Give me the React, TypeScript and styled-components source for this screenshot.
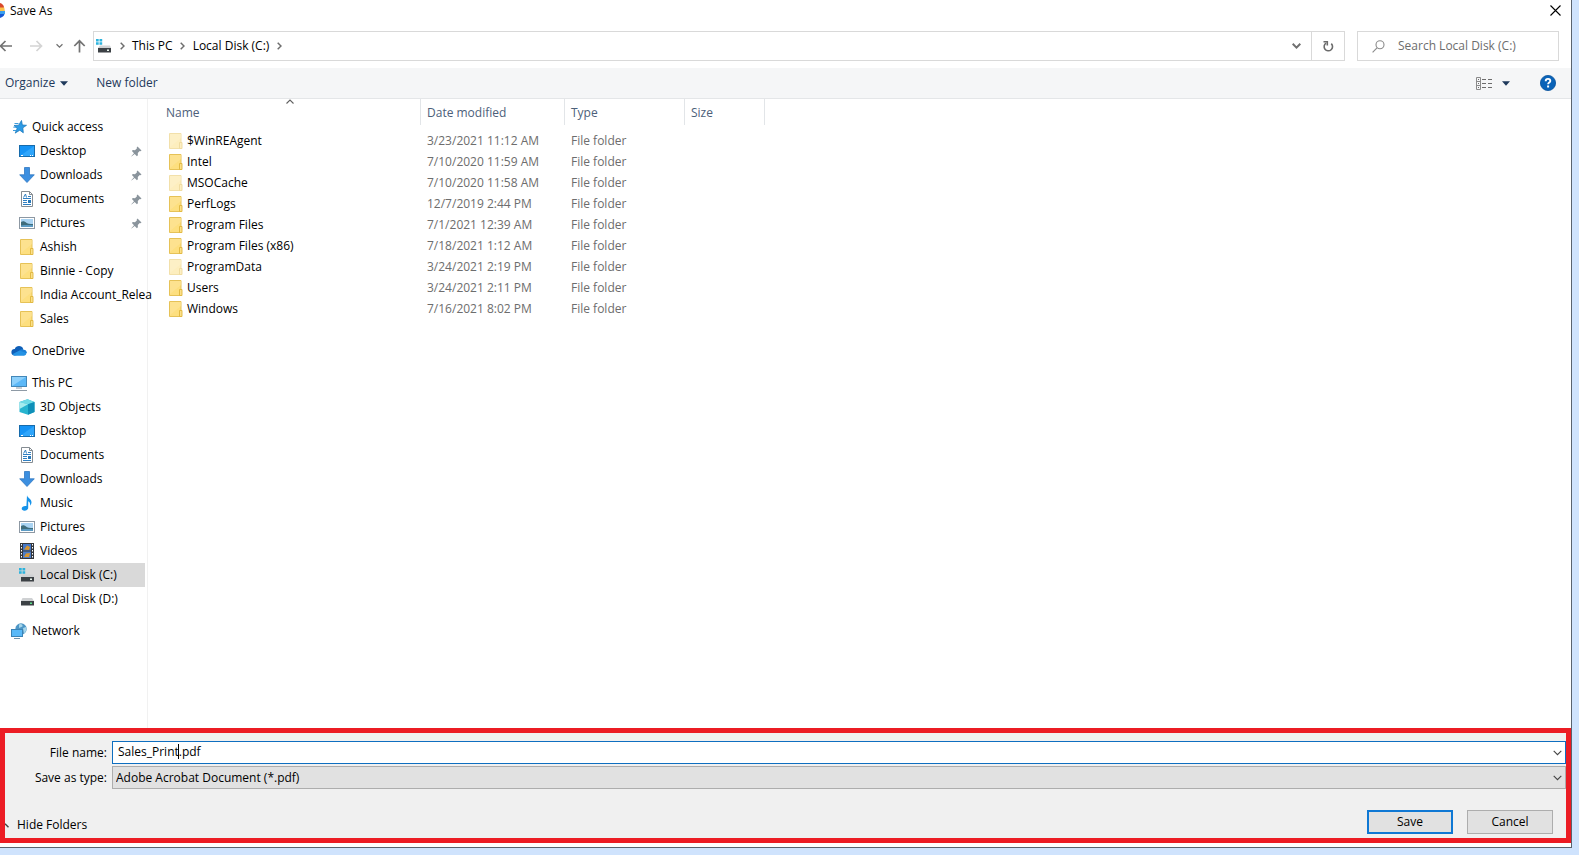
import React from "react";
import styled, { createGlobalStyle, css } from "styled-components";

const GlobalStyle = createGlobalStyle`
  *, *::before, *::after { box-sizing: border-box; }
  body {
    margin: 0;
    background: #cfe3fd;
    color: #000;
    font: 12px/16px "Open Sans", "Noto Sans", sans-serif;
  }
  button, input, select { font: inherit; color: inherit; }
  svg { display: block; flex: none; }
`;

const Desktop = styled.div`
  display: flex;
  min-height: 100vh;
  padding: 0 7px 7px 0;
  background: #cfe3fd;
`;

const Dialog = styled.main`
  flex: 1;
  min-width: 0;
  display: flex;
  flex-direction: column;
  background: #fff;
  border-right: 1px solid #59636f;
  border-bottom: 1px solid #59636f;
`;

const plainButton = css`
  display: flex;
  align-items: center;
  justify-content: center;
  padding: 0;
  border: 0;
  background: none;
`;

const TitleBar = styled.header`
  display: flex;
  align-items: flex-start;
  height: 22px;
  padding-right: 8px;
`;

const Title = styled.h1`
  flex: 1;
  margin: 3px 0 0 5px;
  font-size: 12px;
  font-weight: 400;
`;

const LogoSlot = styled.span`
  padding-top: 3px;
`;

const IconButton = styled.button<{ $width?: number; $before?: number }>`
  ${plainButton}
  width: ${(p) => p.$width ?? 14}px;
  height: 20px;
  margin-left: ${(p) => p.$before ?? 0}px;
  flex: none;
`;

const NavRow = styled.nav`
  display: flex;
  align-items: center;
  padding: 9px 12px 7px 0;
`;

const AddressBar = styled.div`
  flex: 1;
  display: flex;
  align-items: center;
  height: 30px;
  padding-left: 2px;
  margin: 0 12px 0 7px;
  border: 1px solid #d9d9d9;
`;

const Crumb = styled.button`
  ${plainButton}
  height: 28px;
  white-space: nowrap;
`;

const CrumbArrow = styled.span`
  display: flex;
  justify-content: center;
  width: 20px;
`;

const AddressSpacer = styled.span`
  flex: 1;
`;

const RefreshButton = styled.button`
  ${plainButton}
  width: 33px;
  height: 28px;
  border-left: 1px solid #d9d9d9;
`;

const SearchBox = styled.label`
  display: flex;
  align-items: center;
  gap: 13px;
  width: 202px;
  height: 30px;
  padding-left: 14px;
  border: 1px solid #d9d9d9;
`;

const SearchInput = styled.input`
  flex: 1;
  min-width: 0;
  padding: 0;
  border: 0;
  outline: 0;
  background: none;
  &::placeholder { color: #6d6d6d; opacity: 1; }
`;

const Toolbar = styled.div`
  display: flex;
  align-items: center;
  height: 31px;
  padding: 0 15px 0 5px;
  background: #f5f6f7;
  border-bottom: 1px solid #e4e6e8;
  color: #1e395b;
`;

const ToolButton = styled.button<{ $gap?: number }>`
  ${plainButton}
  gap: 5px;
  height: 28px;
  margin-right: ${(p) => p.$gap ?? 0}px;
`;

const ToolSpacer = styled.span`
  flex: 1;
`;

const Body = styled.div`
  flex: 1;
  display: flex;
  min-height: 0;
`;

const Sidebar = styled.aside`
  flex: none;
  width: 148px;
  padding: 16px 2px 8px 0;
  border-right: 1px solid #f1f1f1;
`;

const TreeGroup = styled.ul`
  margin: 0 0 8px;
  padding: 0;
  list-style: none;
`;

const TreeItem = styled.a<{ $root?: boolean; $selected?: boolean }>`
  display: flex;
  align-items: center;
  gap: 5px;
  height: 24px;
  padding-left: ${(p) => (p.$root ? 11 : 19)}px;
  background: ${(p) => (p.$selected ? "#d9d9d9" : "none")};
  color: inherit;
  text-decoration: none;
`;

const TreeLabel = styled.span`
  flex: 1;
  min-width: 0;
  white-space: nowrap;
`;

const IconSlot = styled.span`
  display: flex;
  justify-content: center;
  width: 16px;
`;

const PinSlot = styled.span`
  padding-right: 3px;
`;

const Files = styled.section`
  flex: 1;
  min-width: 0;
  padding-left: 12px;
`;

const FileTable = styled.table`
  width: 605px;
  table-layout: fixed;
  border-collapse: separate;
  border-spacing: 0;
  tbody::before {
    content: "";
    display: block;
    height: 5px;
  }
`;

const HeadCell = styled.th<{ $width: number }>`
  position: relative;
  width: ${(p) => p.$width}px;
  height: 26px;
  padding: 1px 6px 0;
  border-right: 1px solid #e2e5e8;
  color: #4c607a;
  font-weight: 400;
  text-align: left;
`;

const SortMark = styled.span`
  position: absolute;
  top: 0;
  left: 50%;
  margin-left: -4px;
`;

const Cell = styled.td`
  height: 21px;
  padding: 0 6px;
  color: #6d6d6d;
  white-space: nowrap;
`;

const FileName = styled.span`
  display: flex;
  align-items: center;
  gap: 4px;
  padding-left: 3px;
  color: #000;
`;

const SavePanel = styled.form`
  display: flex;
  flex-direction: column;
  margin-bottom: 4px;
  border: 5px solid #ec1c24;
  background: #f0f0f0;
`;

const Field = styled.div`
  display: flex;
  align-items: center;
  margin-bottom: 2px;
  &:first-child { margin-top: 8px; }
`;

const FieldLabel = styled.label`
  width: 107px;
  padding-right: 5px;
  text-align: right;
  white-space: nowrap;
`;

const Combo = styled.div`
  position: relative;
  flex: 1;
  min-width: 0;
`;

const NameInput = styled.input`
  display: block;
  width: 100%;
  height: 23px;
  padding: 0 24px 2px 5px;
  border: 1px solid #0f6fc0;
  border-radius: 0;
  outline: 0;
  background: #fff;
`;

const Caret = styled.span`
  position: absolute;
  top: 3px;
  left: 66px;
  width: 1px;
  height: 15px;
  background: #000;
`;

const TypeSelect = styled.select`
  display: block;
  appearance: none;
  width: 100%;
  height: 23px;
  padding: 0 24px 0 3px;
  border: 1px solid #adadad;
  border-radius: 0;
  background: #e1e1e1;
`;

const ComboArrow = styled.span`
  position: absolute;
  top: 9px;
  right: 4px;
  pointer-events: none;
`;

const Actions = styled.div`
  display: flex;
  align-items: center;
  gap: 14px;
  padding: 19px 13px 4px 0;
`;

const HideFolders = styled.button`
  ${plainButton}
  gap: 8px;
  margin-right: auto;
  padding-top: 6px;
`;

const PushButton = styled.button<{ $primary?: boolean }>`
  width: 86px;
  height: 24px;
  padding: 0;
  border: ${(p) => (p.$primary ? "2px solid #0f78d4" : "1px solid #adadad")};
  background: #e1e1e1;
`;

const AppLogo = () => (
  <svg width="5" height="16" viewBox="0 0 5 16">
    <path d="M0 0c2 .4 3.500 2 4 4l-.5 2H0z" fill="#d9482b" />
    <path d="M0 4.500h4.300L5 9H0z" fill="#fbc34a" />
    <path d="M0 8.500c2-.5 3.500-.5 5-.2 0 3.500-1.700 6-5 6.700z" fill="#1558d6" />
    <path d="M0 8.500c2-.5 3.500-.5 5-.2V11H0z" fill="#3aa0ee" />
  </svg>
);

const CloseIcon = () => (
  <svg width="11" height="11" viewBox="0 0 11 11" stroke="#000" strokeWidth="1.100">
    <path d="M.5.5l10 10M10.500.5l-10 10" />
  </svg>
);

const ArrowIcon = ({ kind }: { kind: "back" | "forward" | "up" }) => (
  <svg
    width="14"
    height="14"
    viewBox="0 0 14 14"
    fill="none"
    stroke={kind === "forward" ? "#d4d4d4" : "#737373"}
    strokeWidth="1.700"
  >
    {kind === "back" && <path d="M13 7H2M6.500 2L1.500 7l5 5" />}
    {kind === "forward" && <path d="M1 7H12M7.500 2l5 5-5 5" />}
    {kind === "up" && <path d="M7.500 13.500V2M2.300 7L7.500 1.800 12.700 7" />}
  </svg>
);

const Chevron = ({ size = 9, color = "#707070", weight = 1.6 }) => (
  <svg width={size} height="6" viewBox="0 0 9 6" fill="none" stroke={color} strokeWidth={weight}>
    <path d="M.7.8l3.800 3.800L8.300.8" />
  </svg>
);

const CrumbChevron = () => (
  <svg width="5" height="8" viewBox="0 0 5 8" fill="none" stroke="#6e6e6e" strokeWidth="1.500">
    <path d="M.7.7L4 4 .7 7.300" />
  </svg>
);

const RefreshIcon = () => (
  <svg width="12" height="12" viewBox="0 0 12 12" fill="none" stroke="#6b6b6b" strokeWidth="1.600">
    <path d="M9.300 3.600A4.200 4.200 0 1 1 4 3.100" />
    <path d="M1.500 1.700h3.800v3.800" />
  </svg>
);

const SearchIcon = () => (
  <svg width="13" height="13" viewBox="0 0 13 13" fill="none" stroke="#8b8b8b" strokeWidth="1.100">
    <circle cx="8" cy="4.800" r="4" />
    <path d="M5 7.800L.6 12.400" />
  </svg>
);

const Triangle = () => (
  <svg width="8" height="5" viewBox="0 0 8 5">
    <path d="M0 .3h8L4 4.700z" fill="#1e395b" />
  </svg>
);

const ViewIcon = () => (
  <svg width="17" height="13" viewBox="0 0 17 13" fill="none" stroke="#8a8a8a">
    <path d="M.5.5h4v12h-4zM.5 4.500h4M.5 8.500h4" />
    <path d="M2 2.500h1M2 6.500h1M2 10.500h1M6 2.500h4M12 2.500h4M6 6.500h4M12 6.500h4M6 10.500h4M12 10.500h4" stroke="#6c6c6c" />
  </svg>
);

const HelpIcon = () => (
  <svg width="16" height="16" viewBox="0 0 16 16">
    <circle cx="8" cy="8" r="7.600" fill="#0a63b8" stroke="#07529c" strokeWidth=".8" />
    <path d="M5.700 6.200C5.700 4.600 6.700 3.900 8 3.900s2.300.8 2.300 2c0 1.600-2.200 1.700-2.200 3.300" fill="none" stroke="#fff" strokeWidth="1.900" />
    <rect x="7.100" y="10.500" width="2" height="2" fill="#fff" />
  </svg>
);

const PinIcon = () => (
  <svg width="11" height="11" viewBox="0 0 11 11">
    <path d="M6.500.5l4 4-1 .8-.8-.2-1.900 2 .1 2.200-1 .9-2.200-2.300L.5 10.600l-.2-.3L3 7.300.9 5.100l.9-1 2.200.1 2-1.900-.3-.9z" fill="#8a949c" />
  </svg>
);

const StarIcon = () => (
  <svg width="16" height="16" viewBox="0 0 16 16">
    <path d="M10.500 1.500l.8 4.500 4.200.3-3.700 2.500.5 5-3.500-2.600-4.600 2.900 2-4.700L3 6.500l4.700-.3z" fill="#2c9be6" stroke="#1b78bd" strokeWidth=".8" />
    <path d="M3.500 4.500h4M2.300 8.200h2.700M2 11.500h3" stroke="#3d9bdb" />
  </svg>
);

const DesktopIcon = () => (
  <svg width="16" height="16" viewBox="0 0 16 16">
    <rect x=".5" y="2.500" width="15" height="11" fill="#1593f5" stroke="#176bab" />
    <path d="M1 13l14-10v10z" fill="#2ea5fb" />
    <path d="M2 12.500h2M11 12.500h1M13 12.500h1" stroke="#fff" />
  </svg>
);

const DownloadIcon = () => (
  <svg width="16" height="16" viewBox="0 0 16 16">
    <path d="M5.500.5h5v7.300h4.800L8 15.500.7 7.800h4.800z" fill="#3c8fe0" stroke="#2e77c1" strokeWidth=".8" />
  </svg>
);

const DocumentIcon = () => (
  <svg width="16" height="16" viewBox="0 0 16 16">
    <path d="M2.500.5h8l3 3v12h-11z" fill="#fff" stroke="#858c92" />
    <path d="M10.500.5v3h3" fill="none" stroke="#858c92" />
    <path d="M4.500 6.500L6.500 3l1 3.500M9 5.500h3M4 7.500h8M4 9.500h4M4 11.500h4M4 13.500h8" fill="none" stroke="#2f7fc2" />
    <path d="M9 9h3v3H9z" fill="#2778ba" />
  </svg>
);

const PictureIcon = () => (
  <svg width="16" height="16" viewBox="0 0 16 16">
    <rect x=".5" y="2.500" width="15" height="11" fill="#fff" stroke="#8d98a3" />
    <rect x="2" y="4" width="12" height="8" fill="#a9d3f2" />
    <path d="M2 7c2-1.500 4-.5 5 .5s4 1.500 7 1.500v3H2z" fill="#3f6d7c" />
    <path d="M2 10.500c4-.7 8-.5 12-.3V12H2z" fill="#5d9cc4" />
  </svg>
);

const FolderIcon = ({ faded = false }: { faded?: boolean }) => (
  <svg width="14" height="16" viewBox="0 0 14 16" opacity={faded ? 0.5 : 1}>
    <path d="M.5.500h11.500V15.500H.5z" fill="#fddf7f" stroke="#e6c257" />
    <path d="M1 1l11 0v4L1 14z" fill="#fee59a" opacity=".6" />
    <path d="M10.500 9.500h2.500v6h-2.500z" fill="#fbe08a" stroke="#e0b63c" strokeWidth=".9" />
  </svg>
);

const CloudIcon = () => (
  <svg width="16" height="16" viewBox="0 0 16 16">
    <path d="M3.500 12.500a3.200 3.200 0 0 1 .3-6.500A4.500 4.500 0 0 1 12.200 6l-1 5z" fill="#0f5fb8" />
    <path d="M2.800 12.500a3 3 0 0 1-1-1.500L8.500 7.500a4 4 0 0 1 4-.8A3.100 3.100 0 0 1 13 12.800H4z" fill="#2492e4" />
    <path d="M8.500 7.500a4 4 0 0 1 4-.8 3.100 3.100 0 0 1 3.300 3.500z" fill="#1a7fd6" />
  </svg>
);

const PcIcon = () => (
  <svg width="16" height="16" viewBox="0 0 16 16">
    <rect x=".5" y="1.500" width="15" height="10" fill="#5cb8f7" stroke="#4387b8" />
    <path d="M1 11V2h14z" fill="#8dd0fb" />
    <path d="M5 13h6M0 15.500h16" stroke="#8e9aa5" />
  </svg>
);

const CubeIcon = () => (
  <svg width="16" height="16" viewBox="0 0 16 16">
    <path d="M.5 3L8.500.3 15.500 3v10L9 15.800.5 13z" fill="#27b4cf" />
    <path d="M.5 3L8.500.3 15.500 3 9 5.300z" fill="#6fdbe6" />
    <path d="M9 5.300L15.500 3v10L9 15.800z" fill="#0f8fb8" />
    <path d="M.5 3L9 5.300 .5 10z" fill="#a5ecee" />
  </svg>
);

const MusicIcon = () => (
  <svg width="16" height="16" viewBox="0 0 16 16">
    <path d="M8 .3c.5 2.700 4.500 3.500 4.500 7 0 1.500-.7 2.700-1.500 3.400.5-2.700-.7-4-1.800-4.500v6.500c0 1.700-1.700 3-3.700 3-1.700 0-2.800-.8-2.800-2.100 0-1.800 2.500-3.100 4.700-2.500z" fill="#1593ea" />
  </svg>
);

const VideoIcon = () => (
  <svg width="16" height="16" viewBox="0 0 16 16">
    <rect x="1" y="0" width="14" height="16" fill="#33363b" />
    <rect x="4" y="1" width="8" height="6.500" fill="#4578c8" />
    <rect x="4" y="8.500" width="8" height="6.500" fill="#4b7cc6" />
    <path d="M5 6.500l3-4 3 1.500-1 3zM5 14l2-3.500 4-.5-1 4z" fill="#d7952f" />
    <path d="M2.500 1v15M13.500 1v15" stroke="#fff" strokeDasharray="1.500 1.500" />
  </svg>
);

const DriveIcon = ({ system = false }: { system?: boolean }) => (
  <svg width="16" height="16" viewBox="0 0 16 16">
    {system && (
      <path d="M0 1h2.700v2.500H0zM3.500 1h2.700v2.500H3.500zM0 4.300h2.700v2.500H0zM3.500 4.300h2.700v2.500H3.500z" fill="#2cb3dd" />
    )}
    <path d={system ? "M4 7.500h10l1 2.500H2z" : "M3.500 7h9.500L15 10H2z"} fill="#cfd1d3" />
    <rect x="2" y="10" width="13" height="4.500" fill="#3c4145" />
    <rect x="11" y="11.500" width="2" height="1.500" fill={system ? "#e9f5ec" : "#5ae08a"} />
  </svg>
);

const NetworkIcon = () => (
  <svg width="16" height="16" viewBox="0 0 16 16">
    <circle cx="10" cy="6" r="5.700" fill="#4d96c6" />
    <path d="M8 1.500c2-1.500 4 0 3.500 2L8 5zM12 5l3-1c.8 2.500 0 5-2 6.500z" fill="#a7d6ea" />
    <rect x=".5" y="6.500" width="11" height="7" fill="#59b9f8" stroke="#3b83b5" />
    <path d="M3 15.500h6" stroke="#6e93ac" />
  </svg>
);

type TreeNode = { label: string; icon: React.ReactNode; pinned?: boolean; selected?: boolean };

const tree: TreeNode[][] = [
  [
    { label: "Quick access", icon: <StarIcon /> },
    { label: "Desktop", icon: <DesktopIcon />, pinned: true },
    { label: "Downloads", icon: <DownloadIcon />, pinned: true },
    { label: "Documents", icon: <DocumentIcon />, pinned: true },
    { label: "Pictures", icon: <PictureIcon />, pinned: true },
    { label: "Ashish", icon: <FolderIcon /> },
    { label: "Binnie - Copy", icon: <FolderIcon /> },
    { label: "India Account_Relea", icon: <FolderIcon /> },
    { label: "Sales", icon: <FolderIcon /> },
  ],
  [{ label: "OneDrive", icon: <CloudIcon /> }],
  [
    { label: "This PC", icon: <PcIcon /> },
    { label: "3D Objects", icon: <CubeIcon /> },
    { label: "Desktop", icon: <DesktopIcon /> },
    { label: "Documents", icon: <DocumentIcon /> },
    { label: "Downloads", icon: <DownloadIcon /> },
    { label: "Music", icon: <MusicIcon /> },
    { label: "Pictures", icon: <PictureIcon /> },
    { label: "Videos", icon: <VideoIcon /> },
    { label: "Local Disk (C:)", icon: <DriveIcon system />, selected: true },
    { label: "Local Disk (D:)", icon: <DriveIcon /> },
  ],
  [{ label: "Network", icon: <NetworkIcon /> }],
];

const files = [
  { name: "$WinREAgent", date: "3/23/2021 11:12 AM", hidden: true },
  { name: "Intel", date: "7/10/2020 11:59 AM" },
  { name: "MSOCache", date: "7/10/2020 11:58 AM", hidden: true },
  { name: "PerfLogs", date: "12/7/2019 2:44 PM" },
  { name: "Program Files", date: "7/1/2021 12:39 AM" },
  { name: "Program Files (x86)", date: "7/18/2021 1:12 AM" },
  { name: "ProgramData", date: "3/24/2021 2:19 PM", hidden: true },
  { name: "Users", date: "3/24/2021 2:11 PM" },
  { name: "Windows", date: "7/16/2021 8:02 PM" },
];

export default function App() {
  return (
    <Desktop>
      <GlobalStyle />
      <Dialog>
        <TitleBar>
          <LogoSlot><AppLogo /></LogoSlot>
          <Title>Save As</Title>
          <IconButton $width={16} aria-label="Close"><CloseIcon /></IconButton>
        </TitleBar>

        <NavRow>
          <IconButton $width={12} aria-label="Back"><ArrowIcon kind="back" /></IconButton>
          <IconButton $before={17} aria-label="Forward"><ArrowIcon kind="forward" /></IconButton>
          <IconButton $before={9} aria-label="Recent locations"><Chevron size={7} /></IconButton>
          <IconButton $before={6} aria-label="Up"><ArrowIcon kind="up" /></IconButton>
          <AddressBar>
            <DriveIcon system />
            <CrumbArrow><CrumbChevron /></CrumbArrow>
            <Crumb>This PC</Crumb>
            <CrumbArrow><CrumbChevron /></CrumbArrow>
            <Crumb>Local Disk (C:)</Crumb>
            <CrumbArrow><CrumbChevron /></CrumbArrow>
            <AddressSpacer />
            <IconButton $width={30} aria-label="Previous locations"><Chevron weight={2} /></IconButton>
            <RefreshButton aria-label="Refresh"><RefreshIcon /></RefreshButton>
          </AddressBar>
          <SearchBox>
            <SearchIcon />
            <SearchInput aria-label="Search" placeholder="Search Local Disk (C:)" />
          </SearchBox>
        </NavRow>

        <Toolbar>
          <ToolButton $gap={28}>Organize <Triangle /></ToolButton>
          <ToolButton>New folder</ToolButton>
          <ToolSpacer />
          <ToolButton $gap={9} aria-label="View"><ViewIcon /></ToolButton>
          <ToolButton $gap={30} aria-label="More view options"><Triangle /></ToolButton>
          <ToolButton aria-label="Help"><HelpIcon /></ToolButton>
        </Toolbar>

        <Body>
          <Sidebar>
            {tree.map((group, g) => (
              <TreeGroup key={g}>
                {group.map((node, i) => (
                  <li key={node.label}>
                    <TreeItem href="#" $root={i === 0} $selected={node.selected}>
                      <IconSlot>{node.icon}</IconSlot>
                      <TreeLabel>{node.label}</TreeLabel>
                      {node.pinned && <PinSlot><PinIcon /></PinSlot>}
                    </TreeItem>
                  </li>
                ))}
              </TreeGroup>
            ))}
          </Sidebar>
          <Files>
            <FileTable>
              <thead>
                <tr>
                  <HeadCell $width={261}>
                    Name
                    <SortMark>
                      <svg width="8" height="5" viewBox="0 0 8 5" fill="none" stroke="#606060" strokeWidth="1.100">
                        <path d="M.5 4.500L4 1l3.500 3.500" />
                      </svg>
                    </SortMark>
                  </HeadCell>
                  <HeadCell $width={144}>Date modified</HeadCell>
                  <HeadCell $width={120}>Type</HeadCell>
                  <HeadCell $width={80}>Size</HeadCell>
                </tr>
              </thead>
              <tbody>
                {files.map((f) => (
                  <tr key={f.name}>
                    <Cell><FileName><FolderIcon faded={f.hidden} />{f.name}</FileName></Cell>
                    <Cell>{f.date}</Cell>
                    <Cell>File folder</Cell>
                    <Cell />
                  </tr>
                ))}
              </tbody>
            </FileTable>
          </Files>
        </Body>

        <SavePanel onSubmit={(e) => e.preventDefault()}>
          <Field>
            <FieldLabel htmlFor="file-name">File name:</FieldLabel>
            <Combo>
              <NameInput id="file-name" defaultValue="Sales_Print.pdf" />
              <Caret />
              <ComboArrow><Chevron color="#444" weight={1.1} /></ComboArrow>
            </Combo>
          </Field>
          <Field>
            <FieldLabel htmlFor="file-type">Save as type:</FieldLabel>
            <Combo>
              <TypeSelect id="file-type">
                <option>Adobe Acrobat Document (*.pdf)</option>
              </TypeSelect>
              <ComboArrow><Chevron color="#444" weight={1.1} /></ComboArrow>
            </Combo>
          </Field>
          <Actions>
            <HideFolders type="button">
              <svg width="4" height="5" viewBox="0 0 4 5" fill="none" stroke="#444" strokeWidth="1.500">
                <path d="M0 .8l3.500 3.500" />
              </svg>
              Hide Folders
            </HideFolders>
            <PushButton type="submit" $primary>Save</PushButton>
            <PushButton type="button">Cancel</PushButton>
          </Actions>
        </SavePanel>
      </Dialog>
    </Desktop>
  );
}
